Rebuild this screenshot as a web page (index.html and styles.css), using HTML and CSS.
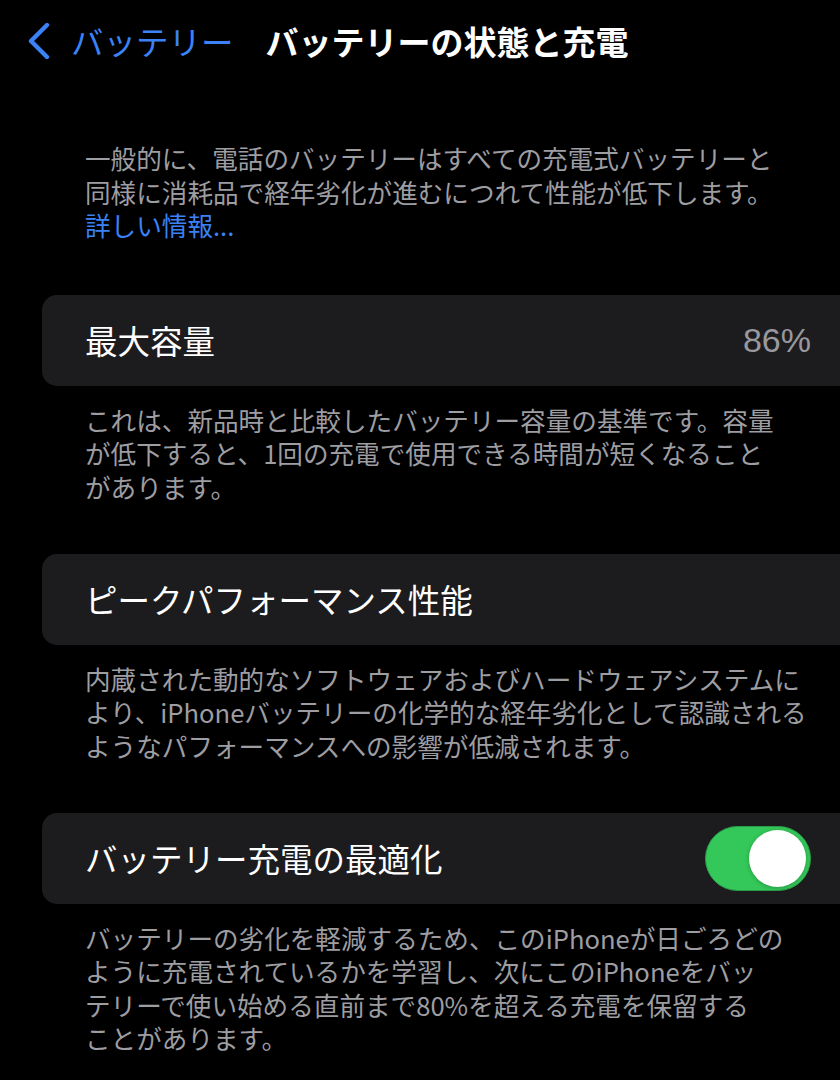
FILE: index.html
```html
<!DOCTYPE html>
<html lang="ja">
<head>
<meta charset="utf-8">
<title>バッテリーの状態と充電</title>
<link rel="stylesheet" href="styles.css">
</head>
<body>
<div class="page">
  <header class="nav">
    <div class="back">
      <svg class="chevron" width="26" height="38" viewBox="0 0 26 38"><path d="M21 3 L5 19 L21 35" fill="none" stroke="#3a82f6" stroke-width="4.4" stroke-linecap="round" stroke-linejoin="round"/></svg>
      <span class="back-label">バッテリー</span>
    </div>
    <h1 class="title">バッテリーの状態と充電</h1>
  </header>

  <p class="intro">一般的に、電話のバッテリーはすべての充電式バッテリーと<br>同様に消耗品で経年劣化が進むにつれて性能が低下します。<br><span class="link">詳しい情報...</span></p>

  <section class="card">
    <span class="label">最大容量</span>
    <span class="value">86%</span>
  </section>
  <p class="footer">これは、新品時と比較したバッテリー容量の基準です。容量<br>が低下すると、1回の充電で使用できる時間が短くなること<br>があります。</p>

  <section class="card card-gap">
    <span class="label">ピークパフォーマンス性能</span>
  </section>
  <p class="footer">内蔵された動的なソフトウェアおよびハードウェアシステムに<br>より、iPhoneバッテリーの化学的な経年劣化として認識される<br>ようなパフォーマンスへの影響が低減されます。</p>

  <section class="card card-gap">
    <span class="label">バッテリー充電の最適化</span>
    <span class="toggle"><span class="knob"></span></span>
  </section>
  <p class="footer">バッテリーの劣化を軽減するため、このiPhoneが日ごろどの<br>ように充電されているかを学習し、次にこのiPhoneをバッ<br>テリーで使い始める直前まで80%を超える充電を保留する<br>ことがあります。</p>
</div>
</body>
</html>
```

FILE: styles.css
```css
html, body {
  margin: 0;
  padding: 0;
  background: #000;
  overflow: hidden;
}
body {
  width: 840px;
  height: 1080px;
  font-family: "Noto Sans CJK JP", "Noto Sans", sans-serif;
  color: #fff;
}
.page {
  display: flex;
  flex-direction: column;
}
.nav {
  display: flex;
  align-items: center;
  height: 82px;
  padding-left: 26px;
}
.back {
  display: flex;
  align-items: center;
  gap: 19px;
}
.chevron {
  display: block;
}
.back-label {
  color: #3a82f6;
  font-size: 32.5px;
  line-height: 1;
}
.title {
  margin: 0 0 0 32px;
  font-size: 33px;
  font-weight: 700;
  line-height: 1;
}
.intro {
  margin: 59px 0 0 85px;
  font-size: 25.6px;
  line-height: 33.5px;
  color: #9d9da2;
}
.link {
  color: #3a82f6;
}
.card {
  display: flex;
  align-items: center;
  justify-content: space-between;
  height: 91px;
  margin: 53px -30px 0 42px;
  padding: 0 59px 0 43px;
  background: #1c1c1e;
  border-radius: 15px;
}
.card-gap {
  margin-top: 50.5px;
}
.label {
  font-size: 32.5px;
  line-height: 1;
  color: #fff;
}
.value {
  font-family: "Liberation Sans", "Noto Sans", sans-serif;
  font-size: 34px;
  color: #98989e;
}
.toggle {
  display: flex;
  align-items: center;
  justify-content: flex-end;
  width: 106px;
  height: 65px;
  padding: 0 4px;
  box-sizing: border-box;
  background: #34c759;
  border: 1.5px solid #2a9d48;
  border-radius: 33px;
}
.knob {
  width: 57px;
  height: 57px;
  border-radius: 50%;
  background: #fff;
  box-shadow: 0 1px 4px rgba(0,0,0,0.25);
}
.footer {
  margin: 17px 0 0 85px;
  font-size: 25.6px;
  line-height: 33.5px;
  color: #9d9da2;
}
```
